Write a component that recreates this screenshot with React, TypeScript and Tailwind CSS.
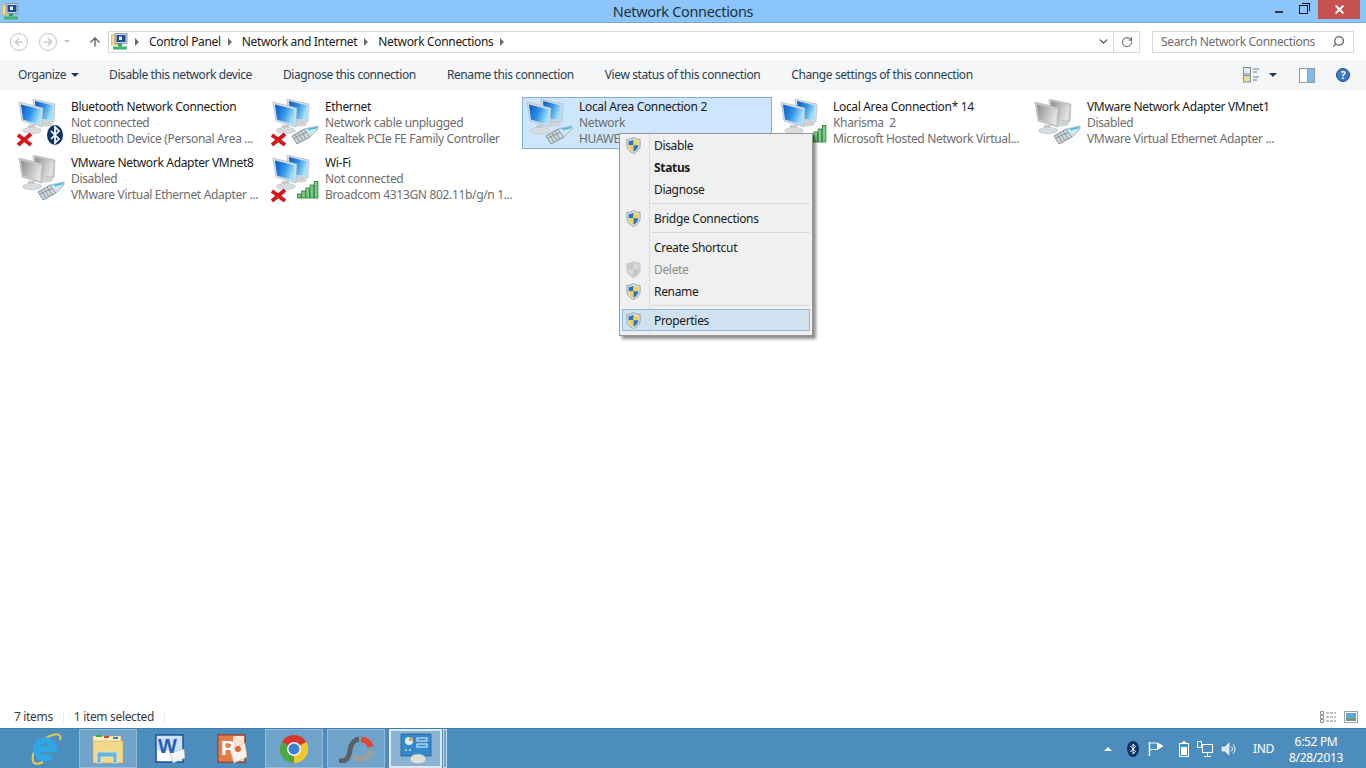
import { Search, ChevronDown, RotateCw, ArrowUp, ArrowLeft, ArrowRight, Minus, X } from "lucide-react";

type Badge = "plug" | "bars" | "bt";

const items: { name: string; status: string; device: string; badge: Badge; off?: boolean; gray?: boolean; selected?: boolean }[] = [
  { name: "Bluetooth Network Connection", status: "Not connected", device: "Bluetooth Device (Personal Area ...", badge: "bt", off: true },
  { name: "Ethernet", status: "Network cable unplugged", device: "Realtek PCIe FE Family Controller", badge: "plug", off: true },
  { name: "Local Area Connection 2", status: "Network", device: "HUAWEI Mobile Connect - 3G Modem", badge: "plug", selected: true },
  { name: "Local Area Connection* 14", status: "Kharisma  2", device: "Microsoft Hosted Network Virtual...", badge: "bars" },
  { name: "VMware Network Adapter VMnet1", status: "Disabled", device: "VMware Virtual Ethernet Adapter ...", badge: "plug", gray: true },
  { name: "VMware Network Adapter VMnet8", status: "Disabled", device: "VMware Virtual Ethernet Adapter ...", badge: "plug", gray: true },
  { name: "Wi-Fi", status: "Not connected", device: "Broadcom 4313GN 802.11b/g/n 1...", badge: "bars", off: true },
];

const tools = ["Disable this network device", "Diagnose this connection", "Rename this connection", "View status of this connection", "Change settings of this connection"];

function Monitor({ gray, points, inner }: { gray?: boolean; points: string; inner: string }) {
  return (
    <>
      <polygon points={points} fill={gray ? "#c9c9c9" : "#d5dde3"} stroke="#a9b2b8" strokeWidth="0.6" />
      <polygon points={inner} fill={gray ? "url(#scrGray)" : "url(#scrBlue)"} />
    </>
  );
}

function NetIcon({ badge, off, gray }: { badge: Badge; off?: boolean; gray?: boolean }) {
  return (
    <svg width="48" height="48" viewBox="0 0 48 48" className="shrink-0 overflow-visible">
      <defs>
        <linearGradient id="scrBlue" x1="0" y1="0" x2="1" y2="0.4">
          <stop offset="0" stopColor="#0b58c8" />
          <stop offset="0.55" stopColor="#2f93e6" />
          <stop offset="1" stopColor="#9fe0f8" />
        </linearGradient>
        <linearGradient id="scrGray" x1="0" y1="0" x2="1" y2="0.4">
          <stop offset="0" stopColor="#8c8c8c" />
          <stop offset="1" stopColor="#e2e2e2" />
        </linearGradient>
      </defs>
      <ellipse cx="29" cy="25" rx="7" ry="2.5" fill="#cfd3d6" />
      <Monitor gray={gray} points="16,0 38,5 37,23 18,21" inner="18,2 36,6.5 35.5,21 19.5,19.5" />
      <rect x="11" y="26" width="7" height="5" fill="#c6cbce" />
      <ellipse cx="15" cy="31.5" rx="9.5" ry="3.2" fill="#d8dcdf" stroke="#b4babe" strokeWidth="0.5" />
      <Monitor gray={gray} points="2,3 26,9 25,28 5,22" inner="4,5.5 24,10.5 23.2,26 6,20.5" />
      {badge === "plug" && (
        <g>
          <polygon points="21,37 33,30 39,38 26,45" fill="#cdd5d9" stroke="#6f7f89" strokeWidth="0.8" />
          <path d="M24 35.500L29 43M27 34L32 41.500M30 32L35 40M23 39L36 33" stroke="#7a8a94" strokeWidth="0.8" />
          <polygon points="33,30 47,27 47,30 39,38" fill="#cfe6ee" stroke="#7d9aa8" strokeWidth="0.6" />
          <path d="M37 30.500L46 28.500" stroke="#45b4e0" strokeWidth="1.600" />
        </g>
      )}
      {badge === "bars" && (
        <g fill="#7fca85" stroke="#1f7a33" strokeWidth="0.8">
          <rect x="26.5" y="39" width="3.6" height="4" />
          <rect x="30.7" y="36" width="3.6" height="7" />
          <rect x="34.9" y="33" width="3.6" height="10" />
          <rect x="39.1" y="30" width="3.6" height="13" />
          <rect x="43.3" y="26.5" width="3.6" height="16.5" />
        </g>
      )}
      {badge === "bt" && (
        <g>
          <ellipse cx="38" cy="36" rx="8" ry="10" fill="#0b3468" />
          <path d="M34 32 L42 40 L38 44 V28 L42 32 L34 40" fill="none" stroke="#fff" strokeWidth="1.7" />
        </g>
      )}
      {off && <path d="M1 36 L14 46 M14 35 L1 46" stroke="#d3171d" strokeWidth="3.8" />}
    </svg>
  );
}

function Shield({ disabled }: { disabled?: boolean }) {
  const a = disabled ? "#c4c4c4" : "#2f73c4";
  const b = disabled ? "#dadada" : "#f3d24a";
  return (
    <svg width="15" height="17" viewBox="0 0 16 18">
      <path d="M8 .5C5.5 2 3.5 2.6 1 2.6V9c0 4 3.5 7 7 8.5 3.500-1.500 7-4.500 7-8.500V2.600C12.500 2.600 10.500 2 8 .5Z" fill={disabled ? "#d2d2d2" : "#dfe3e6"} stroke={disabled ? "#bbb" : "#7c8a96"} strokeWidth="0.8" />
      <path d="M8 2.500C6 3.700 4.500 4.200 2.800 4.200V8.700H8Z" fill={a} />
      <path d="M8 2.500C10 3.700 11.500 4.200 13.200 4.200V8.700H8Z" fill={b} />
      <path d="M2.800 8.700C2.800 11.700 5.500 14.500 8 15.700V8.700Z" fill={b} />
      <path d="M13.200 8.700C13.200 11.700 10.500 14.500 8 15.700V8.700Z" fill={a} />
    </svg>
  );
}

function NetworkFolder({ size = 17 }: { size?: number }) {
  return (
    <svg width={size} height={size} viewBox="0 0 17 17">
      <rect x="0.500" y="2" width="9" height="10" fill="#f5dc8c" stroke="#cdb05c" strokeWidth="0.6" />
      <rect x="4" y="0.500" width="12" height="10" fill="#cfd8de" stroke="#7e8b95" strokeWidth="0.8" />
      <rect x="5.500" y="2" width="9" height="7" fill="#1d4e9e" />
      <rect x="8" y="3.500" width="3" height="3.500" fill="#e8f0f8" />
      <rect x="7" y="10.500" width="4" height="3" fill="#2aa05a" />
      <rect x="2" y="13.500" width="14" height="3" fill="#3fb56f" />
    </svg>
  );
}

function MenuRow({ label, shield, bold, disabled, active }: { label: string; shield?: boolean; bold?: boolean; disabled?: boolean; active?: boolean }) {
  return (
    <div className={`relative mx-[2px] flex h-[22px] items-center ${active ? "border border-[#8fbbdf] bg-[#c8deef]/80" : ""} ${disabled ? "text-[#8c8c8c]" : "text-[#1a1a1a]"} ${bold ? "font-bold" : ""}`}>
      <div className={`flex w-[32px] shrink-0 justify-start ${active ? "pl-[3px]" : "pl-[4px]"}`}>
        {shield ? <Shield disabled={disabled} /> : null}
      </div>
      <span className={`pt-[2px] ${active ? "-ml-px" : ""}`}>{label}</span>
    </div>
  );
}

function MenuSep() {
  return (
    <div className="flex h-[7px] items-center pl-[31px] pr-[2px]">
      <div className="h-[2px] w-full border-t border-[#d7d7d7] border-b-white" />
    </div>
  );
}

function ContextMenu() {
  return (
    <div className="absolute left-[619px] top-[133px] h-[203px] w-[194px] border border-[#979797] bg-[#f0f0f0] shadow-[3px_3px_3px_rgba(0,0,0,0.45)]">
      <div className="absolute bottom-0 left-[29px] top-0 w-px bg-[#dcdcdc]" />
      <MenuRow label="Disable" shield />
      <MenuRow label="Status" bold />
      <MenuRow label="Diagnose" />
      <MenuSep />
      <MenuRow label="Bridge Connections" shield />
      <MenuSep />
      <MenuRow label="Create Shortcut" />
      <MenuRow label="Delete" shield disabled />
      <MenuRow label="Rename" shield />
      <MenuSep />
      <MenuRow label="Properties" shield active />
    </div>
  );
}

function Crumb({ label }: { label?: string }) {
  return (
    <>
      {label ? <span className="text-[#1a1a1a]">{label}</span> : null}
      <span className="ml-[7px] mr-[10px] h-0 w-0 border-y-[4px] border-l-[4px] border-y-transparent border-l-[#6a6a6a]" />
    </>
  );
}

function TaskSlot({ open, children }: { open?: boolean; children: React.ReactNode }) {
  return (
    <div className={`flex h-[39px] w-[58px] shrink-0 items-center justify-center ${open ? "border border-white/25 bg-white/20" : ""}`}>
      {children}
    </div>
  );
}

function IEIcon() {
  return (
    <svg width="32" height="34" viewBox="0 0 32 34">
      <path d="M3 29C1 20 9 9 20 4C27 1 32 2 30 8" fill="none" stroke="#e8c94a" strokeWidth="2" />
      <path d="M3 29C4 33 9 32 13 30" fill="none" stroke="#e8c94a" strokeWidth="2" />
      <path d="M6.500 17H24A9 9 0 1 0 21 24" fill="none" stroke="#2fa6e6" strokeWidth="6" />
    </svg>
  );
}

function FolderIcon() {
  return (
    <svg width="32" height="30" viewBox="0 0 32 30">
      <rect x="1" y="2" width="28" height="6" fill="#fdf2c4" stroke="#c8a95a" strokeWidth="0.6" />
      <rect x="4" y="1" width="6" height="2" fill="#3faa4c" />
      <rect x="12" y="2" width="5" height="2" fill="#d8452c" />
      <rect x="21" y="3" width="5" height="2" fill="#2f82c8" />
      <rect x="1" y="7" width="30" height="22" fill="#f2d98a" stroke="#c6a75a" strokeWidth="0.6" />
      <path d="M5 18H25V29H21V23H9V29H5Z" fill="#6fb2d8" stroke="#d4ecf6" strokeWidth="0.8" />
    </svg>
  );
}

function WordIcon() {
  return (
    <svg width="30" height="30" viewBox="0 0 30 30">
      <rect x="1" y="1" width="27" height="27" fill="#fff" stroke="#1b4f94" strokeWidth="1.500" />
      <rect x="2" y="2" width="25" height="15" fill="#cfe0f3" />
      <polygon points="15,19 29,15 30,24 18,29" fill="#f3f5f8" stroke="#9fb0c4" strokeWidth="0.6" />
      <text x="3" y="19" fontFamily="'Liberation Sans', sans-serif" fontSize="20" fontWeight="700" fill="#1f5fb4">W</text>
    </svg>
  );
}

function PptIcon() {
  return (
    <svg width="30" height="30" viewBox="0 0 30 30">
      <rect x="1" y="1" width="27" height="27" fill="#f6e3d6" stroke="#a33a1d" strokeWidth="1.500" />
      <rect x="2" y="2" width="14" height="25" fill="#e8793f" />
      <polygon points="13,16 28,9 30,23 17,29" fill="#f7f2ee" stroke="#c8a898" strokeWidth="0.6" />
      <circle cx="21" cy="15" r="3" fill="#e2682f" />
      <text x="4" y="21" fontFamily="'Liberation Sans', sans-serif" fontSize="21" fontWeight="700" fill="#fff">P</text>
    </svg>
  );
}

function ChromeIcon() {
  return (
    <svg width="30" height="30" viewBox="0 0 32 32">
      <path d="M16 16L3 8.500A15 15 0 0 1 29 8.500Z" fill="#d9362b" />
      <path d="M16 16L29 8.500A15 15 0 0 1 16 31Z" fill="#f2c82f" />
      <path d="M16 16L16 31A15 15 0 0 1 3 8.500Z" fill="#4ea83f" />
      <circle cx="16" cy="16" r="7.500" fill="#eef2f6" />
      <circle cx="16" cy="16" r="5.800" fill="#3d7fd0" />
    </svg>
  );
}

function RingIcon() {
  return (
    <svg width="34" height="28" viewBox="0 0 34 28">
      <path d="M0 26C8 27 10 22 11 15C12 8 16 4.500 20 4" fill="none" stroke="#5a5f63" strokeWidth="5" />
      <path d="M22 4.500A9.500 9.500 0 0 1 31.500 12" fill="none" stroke="#e5452c" strokeWidth="6" />
      <path d="M31.500 15A9.500 9.500 0 0 1 15 21" fill="none" stroke="#9aa0a4" strokeWidth="6" />
    </svg>
  );
}

function ControlPanelIcon() {
  return (
    <svg width="32" height="32" viewBox="0 0 32 32">
      <rect x="1" y="1" width="30" height="22" fill="#3389cc" stroke="#1c5e9c" strokeWidth="0.8" />
      <circle cx="9" cy="8" r="4" fill="#dfeef8" />
      <path d="M9 8V4A4 4 0 0 1 13 8Z" fill="#e8a13a" />
      <rect x="17" y="5" width="10" height="3" fill="none" stroke="#eaf4fb" />
      <rect x="17" y="11" width="10" height="3" fill="none" stroke="#eaf4fb" />
      <circle cx="6" cy="17" r="1" fill="#f0d060" />
      <circle cx="10" cy="17" r="1" fill="#bfe0f5" />
      <ellipse cx="18" cy="26" rx="8" ry="5" fill="#dededa" stroke="#8d9094" strokeWidth="0.5" />
    </svg>
  );
}

export default function App() {
  return (
    <div className="relative flex h-[768px] w-[1366px] flex-col overflow-hidden bg-white font-['Noto_Sans',sans-serif] text-[12px] tracking-[-0.33px]">
      <header className="relative flex h-[23px] shrink-0 items-center justify-center border-b border-[#78a8d2] bg-[#8bc5f9] text-[14.5px] leading-none text-[#1f2f3f]">
        <div className="absolute left-[2px] top-[3px]"><NetworkFolder /></div>
        <span>Network Connections</span>
        <div className="absolute right-[6px] top-0 flex h-[19px] items-start">
          <Minus size={12} strokeWidth={3} className="mr-[14px] mt-[6px] text-[#111]" />
          <span className="relative mr-[10px] mt-[5px] block h-[9px] w-[9px] border border-[#111] before:absolute before:-right-[3px] before:-top-[3px] before:h-[8px] before:w-[8px] before:border-r before:border-t before:border-[#111]" />
          <div className="flex h-[19px] w-[42px] items-center justify-center bg-[#c75050]">
            <X size={13} strokeWidth={3.500} className="text-white" />
          </div>
        </div>
      </header>

      <nav className="flex h-[37px] shrink-0 items-center pl-[10px] pr-[12px]">
        <div className="flex h-[18px] w-[18px] items-center justify-center rounded-full border border-[#c4c4c4] text-[#c4c4c4]"><ArrowLeft size={12} strokeWidth={2.500} /></div>
        <div className="ml-[11px] flex h-[18px] w-[18px] items-center justify-center rounded-full border border-[#c4c4c4] text-[#c4c4c4]"><ArrowRight size={12} strokeWidth={2.500} /></div>
        <span className="ml-[7px] h-0 w-0 border-x-[3px] border-t-[3px] border-x-transparent border-t-[#c4c4c4]" />
        <ArrowUp size={14} strokeWidth={2.500} className="ml-[18px] text-[#6a6a6a]" />
        <div className="ml-[6px] flex h-[22px] w-[1032px] items-center border border-[#d9d9d9] pl-[2px]">
          <NetworkFolder />
          <Crumb />
          <Crumb label="Control Panel" />
          <Crumb label="Network and Internet" />
          <Crumb label="Network Connections" />
          <div className="ml-auto flex h-full items-center">
            <ChevronDown size={13} strokeWidth={2.500} className="mr-[3px] text-[#555]" />
            <div className="flex h-full w-[26px] items-center justify-center border-l border-[#d9d9d9]">
              <RotateCw size={12} strokeWidth={2.500} className="text-[#777]" />
            </div>
          </div>
        </div>
        <div className="ml-[12px] flex h-[22px] w-[202px] items-center justify-between border border-[#d9d9d9] pl-[8px] pr-[8px] text-[#6d6d6d]">
          <span>Search Network Connections</span>
          <Search size={13} strokeWidth={2.500} className="-scale-x-100 text-[#666]" />
        </div>
      </nav>

      <div className="flex h-[30px] shrink-0 items-center bg-[#f5f6f7] pl-[18px] pr-[16px] tracking-[-0.4px] text-[#2a3f55]">
        <span>Organize</span>
        <span className="ml-[5px] h-0 w-0 border-x-[4px] border-t-[4px] border-x-transparent border-t-[#1e395b]" />
        <div className="ml-[30px] flex gap-[31px]">
          {tools.map((t) => (
            <span key={t}>{t}</span>
          ))}
        </div>
        <div className="ml-auto flex items-center">
          <svg width="17" height="16" viewBox="0 0 17 16">
            <rect x="0.500" y="0.500" width="7" height="6.500" fill="#dff0e4" stroke="#7f8c94" />
            <rect x="0.500" y="8.500" width="7" height="6.500" fill="#e6df9a" stroke="#7f8c94" />
            <path d="M10 2H16M10 5H14M10 10H16M10 13H14" stroke="#6b7780" />
          </svg>
          <span className="ml-[9px] h-0 w-0 border-x-[4px] border-t-[4px] border-x-transparent border-t-[#1e395b]" />
          <div className="ml-[22px] flex h-[15px] w-[16px] border border-[#8d9aa5]">
            <div className="flex-1 border-r border-[#8d9aa5] bg-white" />
            <div className="w-[6px] bg-[#7fbcec]" />
          </div>
          <div className="ml-[21px] flex h-[14px] w-[14px] items-center justify-center rounded-full border border-[#24508f] bg-[#3f76c8] text-[10px] font-bold leading-none text-white">?</div>
        </div>
      </div>

      <main className="grid flex-1 grid-cols-[repeat(5,250px)] content-start gap-[4px] pl-[14px] pr-0 pt-[7px]">
        {items.map((item) => (
          <div key={item.name} className={`flex h-[52px] border pl-[2px] ${item.selected ? "border-[#7fb0dc] bg-[#cde6fc]" : "border-transparent"}`}>
            <div className="mt-[1px]"><NetIcon badge={item.badge} off={item.off} gray={item.gray} /></div>
            <div className="ml-[6px] flex flex-col justify-center whitespace-pre leading-[16px] text-[#6d6d6d]">
              <span className="text-[#1a1a1a]">{item.name}</span>
              <span>{item.status}</span>
              <span>{item.device}</span>
            </div>
          </div>
        ))}
      </main>

      <div className="flex h-[21px] shrink-0 items-center pb-[2px] pl-[14px] pr-[8px] text-[#3c3c3c]">
        <span>7 items</span>
        <span className="mx-[10px] h-[14px] w-px bg-[#efefef]" />
        <span>1 item selected</span>
        <span className="ml-[10px] h-[14px] w-px bg-[#efefef]" />
        <div className="ml-auto flex items-center gap-[8px]">
          <svg width="16" height="12" viewBox="0 0 16 12">
            <path d="M.5 .5H3.500V3.500H.5ZM.5 4.500H3.500V7.500H.5ZM.5 8.500H3.500V11.500H.5Z" fill="none" stroke="#8a949c" />
            <path d="M6 2H16M6 6H16M6 10H16" stroke="#7d8890" strokeDasharray="3 1" />
          </svg>
          <svg width="14" height="12" viewBox="0 0 14 12">
            <rect x="0.500" y="0.500" width="13" height="11" fill="#fff" stroke="#9aa4ac" />
            <rect x="2" y="2" width="10" height="5" fill="#5fa6d8" />
            <rect x="2" y="7" width="10" height="3" fill="#6f9a72" />
          </svg>
        </div>
      </div>

      <footer className="flex h-[40px] shrink-0 items-center gap-[4px] border-t border-[#3f7fb0] bg-[#4d8dbd] pl-[17px] pr-[12px] text-white">
        <TaskSlot><IEIcon /></TaskSlot>
        <TaskSlot open><FolderIcon /></TaskSlot>
        <TaskSlot><WordIcon /></TaskSlot>
        <TaskSlot><PptIcon /></TaskSlot>
        <TaskSlot open><ChromeIcon /></TaskSlot>
        <TaskSlot open><RingIcon /></TaskSlot>
        <div className="flex h-[39px] w-[58px] shrink-0">
          <div className="flex w-[53px] items-center justify-center border-2 border-white/70 bg-white/35"><ControlPanelIcon /></div>
          <div className="ml-[1px] w-[4px] border border-white/60 bg-white/20" />
        </div>

        <div className="ml-auto flex items-center">
          <span className="h-0 w-0 border-x-[4px] border-b-[4px] border-x-transparent border-b-white" />
          <svg width="12" height="16" viewBox="0 0 12 16" className="ml-[15px]">
            <ellipse cx="6" cy="8" rx="6" ry="8" fill="#0b3468" />
            <path d="M3.500 5L8.500 10.500L6 13V3L8.500 5.500L3.500 11" fill="none" stroke="#fff" />
          </svg>
          <svg width="16" height="16" viewBox="0 0 16 16" className="ml-[9px]">
            <path d="M1.500 1V15" stroke="#fff" strokeWidth="1.500" />
            <path d="M2.500 2H9L15 5L9 8.500H2.500" fill="none" stroke="#fff" />
            <path d="M9 2L15 5L9 8.500Z" fill="#fff" />
          </svg>
          <svg width="10" height="16" viewBox="0 0 10 16" className="ml-[15px]">
            <rect x="0.500" y="2.500" width="9" height="13" fill="none" stroke="#fff" />
            <rect x="3" y="0.500" width="4" height="2" fill="#fff" />
            <rect x="2" y="6" width="6" height="8" fill="#fff" />
          </svg>
          <svg width="16" height="16" viewBox="0 0 16 16" className="ml-[8px]">
            <rect x="0.500" y="0.500" width="4" height="6" fill="none" stroke="#fff" />
            <rect x="5.500" y="3.500" width="10" height="8" fill="none" stroke="#fff" />
            <path d="M10.500 11.500V15M7 15.500H14" stroke="#fff" />
          </svg>
          <svg width="15" height="14" viewBox="0 0 15 14" className="ml-[8px]">
            <path d="M1 5H4L8 1V13L4 9H1Z" fill="#d9e8f3" stroke="#fff" strokeWidth="0.600" />
            <path d="M10 4.500A3 3 0 0 1 10 9.500M12 2.500A6 6 0 0 1 12 11.500" fill="none" stroke="#fff" />
          </svg>
          <span className="ml-[17px] w-[24px]">IND</span>
          <div className="ml-[1px] flex w-[76px] flex-col items-center pt-[2px] leading-[16px]">
            <span>6:52 PM</span>
            <span>8/28/2013</span>
          </div>
        </div>
      </footer>

      <ContextMenu />
    </div>
  );
}
